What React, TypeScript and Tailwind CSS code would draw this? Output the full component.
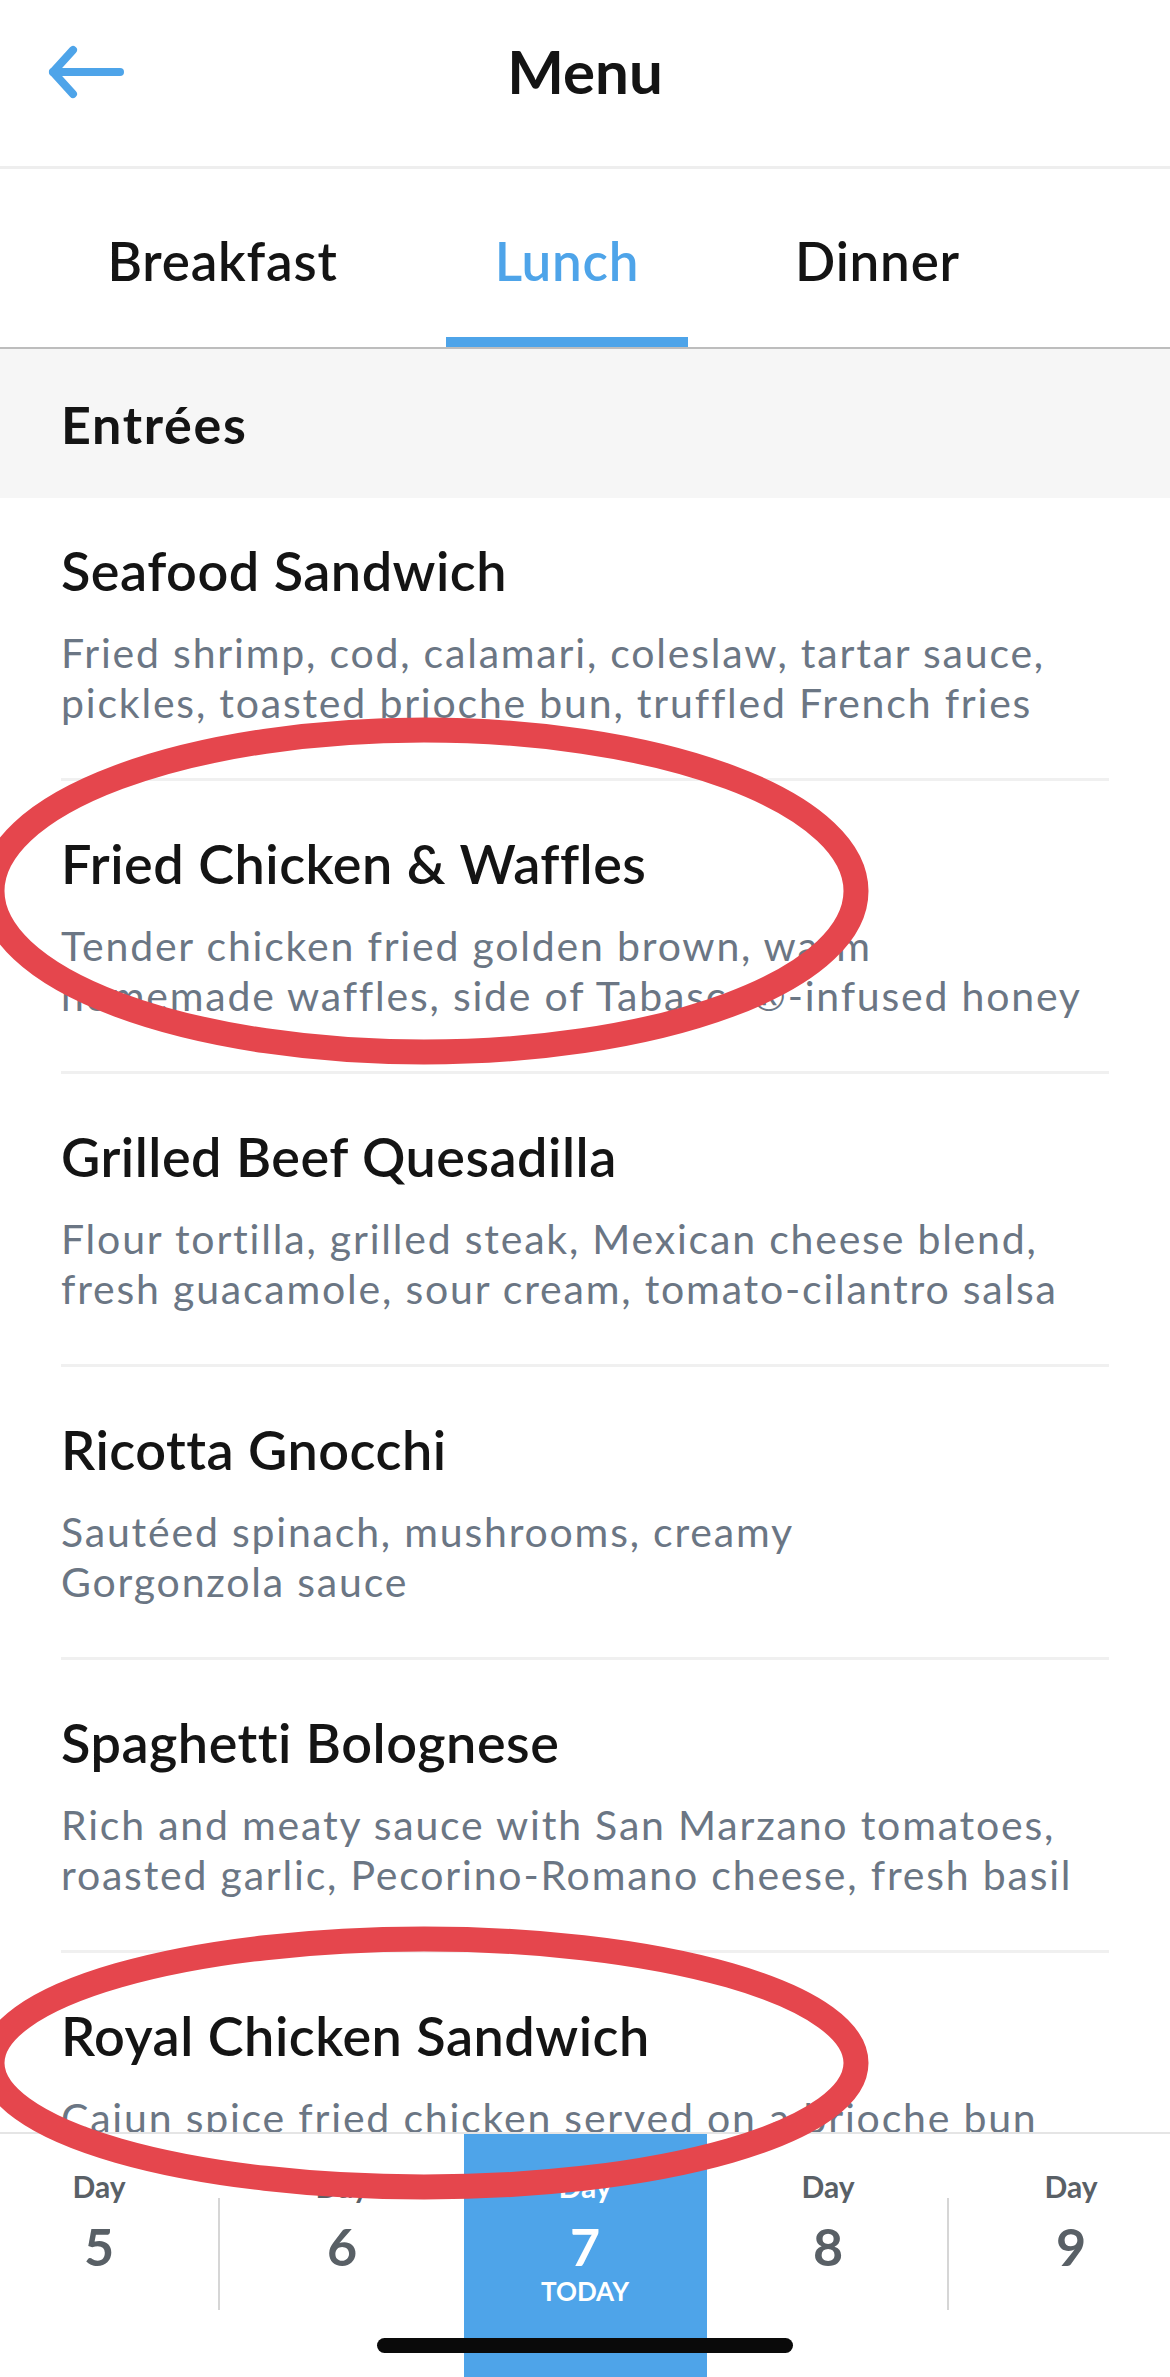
const tabs = [
  { name: 'Breakfast', width: 'w-[327px]' },
  { name: 'Lunch', width: 'w-[242px]', active: true },
  { name: 'Dinner', width: 'w-[259px]' },
]

const entrees = [
  {
    name: 'Seafood Sandwich',
    lines: ['Fried shrimp, cod, calamari, coleslaw, tartar sauce,', 'pickles, toasted brioche bun, truffled French fries'],
  },
  {
    name: 'Fried Chicken & Waffles',
    lines: ['Tender chicken fried golden brown, warm', 'homemade waffles, side of Tabasco®-infused honey'],
  },
  {
    name: 'Grilled Beef Quesadilla',
    lines: ['Flour tortilla, grilled steak, Mexican cheese blend,', 'fresh guacamole, sour cream, tomato-cilantro salsa'],
  },
  {
    name: 'Ricotta Gnocchi',
    lines: ['Sautéed spinach, mushrooms, creamy', 'Gorgonzola sauce'],
  },
  {
    name: 'Spaghetti Bolognese',
    lines: ['Rich and meaty sauce with San Marzano tomatoes,', 'roasted garlic, Pecorino-Romano cheese, fresh basil'],
  },
  {
    name: 'Royal Chicken Sandwich',
    lines: ['Cajun spice fried chicken served on a brioche bun'],
  },
]

const days = [
  { n: 5, divider: true },
  { n: 6 },
  { n: 7, today: true },
  { n: 8, divider: true },
  { n: 9 },
]

function BackArrow() {
  return (
    <svg viewBox="0 0 80 60" className="h-[60px] w-[80px]" fill="none" stroke="#4ea4e9" strokeWidth={8} strokeLinecap="round" strokeLinejoin="round">
      <path d="M29 9 L9 31 L29 53" />
      <path d="M9 31 H76" />
    </svg>
  )
}

export default function App() {
  return (
    <div className="relative flex h-[2377px] w-[1170px] flex-col overflow-hidden bg-white font-[Lato,sans-serif] text-[#141414]">
      {/* Header */}
      <header className="h-[169px] shrink-0 border-b-[3px] border-[#eeeeee]">
        <div className="flex h-[142px] items-center px-[44px]">
          <button aria-label="Back">
            <BackArrow />
          </button>
          <h1 className="flex-1 text-center text-[60px] font-bold leading-none">Menu</h1>
          <div className="w-[80px]" />
        </div>
      </header>

      {/* Meal tabs */}
      <nav className="flex h-[180px] shrink-0 gap-[60px] border-b-2 border-[#bdbdbd] pl-[59px]">
        {tabs.map((tab) => (
          <button key={tab.name} className={`flex flex-col ${tab.width}`}>
            <span
              className={`flex flex-1 items-center justify-center pt-[16px] text-[53px] font-semibold tracking-[0.8px] ${
                tab.active ? 'text-[#4ea4e9]' : 'text-[#141414]'
              }`}
            >
              {tab.name}
            </span>
            <span className={`h-[10px] w-full ${tab.active ? 'bg-[#4ea4e9]' : 'bg-transparent'}`} />
          </button>
        ))}
      </nav>

      {/* Section header */}
      <div className="flex h-[149px] shrink-0 items-center bg-[#f6f6f6] pl-[61px]">
        <h2 className="text-[52px] font-bold tracking-[1.7px]">Entrées</h2>
      </div>

      {/* Items */}
      <div className="flex-1 overflow-hidden px-[61px]">
        {entrees.map((item, i) => (
          <div
            key={item.name}
            className={`pb-[50px] ${i === 0 ? 'pt-[43px]' : 'border-t-[3px] border-[#f0f0f0] pt-[53px]'}`}
          >
            <h3 className="text-[54px] font-semibold leading-[60px] tracking-[0.5px]">{item.name}</h3>
            <p className="mt-[27px] text-[41px] leading-[50px] tracking-[1.8px] text-[#6b7684]">
              {item.lines.map((line, j) => (
                <span key={j} className="block whitespace-nowrap">
                  {line}
                </span>
              ))}
            </p>
          </div>
        ))}
      </div>

      {/* Day picker */}
      <div className="h-[245px] shrink-0 border-t-2 border-[#e5e5e5] bg-white">
        <div className="flex h-full justify-center">
          {days.map((d) => (
            <div
              key={d.n}
              className={`relative flex w-[243px] shrink-0 flex-col items-center pt-[34px] font-bold ${
                d.today ? 'bg-[#4ea4e9] text-white' : 'text-[#596066]'
              }`}
            >
              <span className="text-[30px] leading-[36px]">Day</span>
              <span className="mt-[12px] text-[52px] leading-[60px]">{d.n}</span>
              {d.today && <span className="text-[26px] leading-[30px]">TODAY</span>}
              {d.divider && <span className="absolute right-[1px] top-[64px] h-[112px] w-[2px] bg-[#d6d6d6]" />}
            </div>
          ))}
        </div>
      </div>

      {/* Home indicator */}
      <div className="absolute bottom-[24px] left-[377px] h-[15px] w-[416px] rounded-full bg-[#0a0a0a]" />

      {/* Red annotation rings */}
      <svg className="pointer-events-none absolute inset-0 h-full w-full" viewBox="0 0 1170 2377" fill="none">
        <ellipse cx="424" cy="891" rx="432" ry="161" stroke="#e5464d" strokeWidth={25} />
        <ellipse cx="424" cy="2063" rx="432" ry="124" stroke="#e5464d" strokeWidth={25} />
      </svg>
    </div>
  )
}
